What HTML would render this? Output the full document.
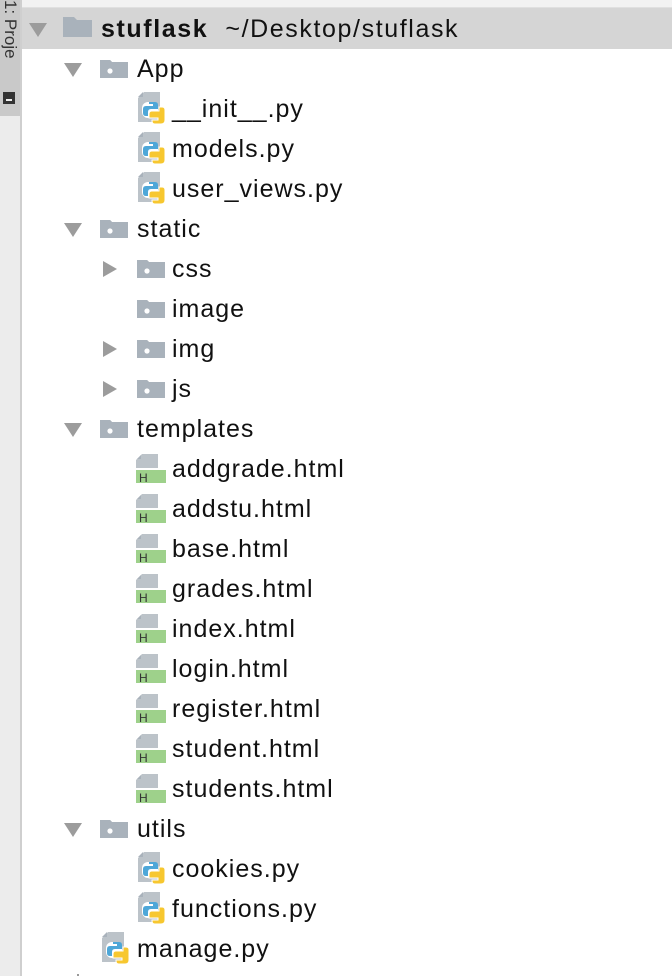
<!DOCTYPE html><html><head><style>
body{margin:0;width:672px;height:976px;background:#fff;position:relative;overflow:hidden;font-family:"Liberation Sans",Helvetica,Arial,sans-serif}
.ls{position:absolute;left:0;top:0;width:20px;height:976px;background:#ececec;border-right:2px solid #cfcfcf}
.lt{position:absolute;left:0;top:0;width:20px;height:116px;background:#c9c9c9}
.top{position:absolute;left:22px;top:0;right:0;height:7px;background:#f2f2f2;border-bottom:1px solid #e0e0e0}
.hdr{position:absolute;left:22px;top:8px;right:0;height:41px;background:#d5d5d5}
.r{position:absolute;height:40px;font-size:25px;letter-spacing:1px;line-height:40px;color:#111;white-space:nowrap}
.tri{position:absolute;width:0;height:0}
.down{border-left:9px solid transparent;border-right:9px solid transparent;border-top:14px solid #9c9c9c}
.right{border-top:8px solid transparent;border-bottom:8px solid transparent;border-left:14px solid #9c9c9c}
svg{position:absolute;overflow:visible}
</style></head><body>
<div class="ls"></div><div class="lt"></div>
<div style="position:absolute;left:0;top:0;width:20px;height:80px;font-size:17px;color:#333;writing-mode:vertical-rl;line-height:20px;">1: Proje</div>
<div style="position:absolute;left:3px;top:92px;width:12px;height:12px;background:#333"><div style="position:absolute;left:3px;top:7px;width:6px;height:2px;background:#eee"></div></div>
<div class="top"></div><div class="hdr"></div>
<svg width="0" height="0" style="position:absolute"><defs>
<g id="fold"><path d="M0 3 L0 20 L29 20 L29 3 L14 3 L11 0 L0 0 Z" fill="#a9b2bb"/></g>
<g id="fdot"><path d="M0 0 L0 18 L28 18 L28 2 L12 2 L10 0 Z" fill="#a9b2bb"/><path d="M0 0 L10 0 L12 2 L12 5 L0 5 Z" fill="#a9b2bb"/><circle cx="10" cy="11" r="2.6" fill="#fff"/></g>
<g id="py"><path d="M6 0 L22 0 L22 30 L0 30 L0 6 Z" fill="#bcc3c9"/><path d="M0 5 L5 5 L5 0 Z" fill="#a9b2bb"/>
<rect x="4" y="10" width="16" height="16" rx="6" fill="#fff"/>
<path d="M11 10 L17 10 Q20 10 20 13 L20 17 L13 17 Q10 17 10 20 L10 24 L8 24 Q5 24 5 21 L5 17 Q5 14 8 14 L15 14 L15 12 L11 12 Z" fill="#4ea7d8"/>
<path d="M11 26 L11 22 Q11 19 14 19 L21 19 L21 15 L24 15 Q27 15 27 18 L27 28 Q27 32 23 32 L17 32 Q14 32 14 29 L14 28 L20 28 L20 26 Z" fill="#f7c72f" stroke="#fff" stroke-width="1"/></g>
<g id="ht"><path d="M6 0 L22 0 L22 14 L0 14 L0 6 Z" fill="#bcc3c9"/><path d="M1 5 L5 5 L5 1 Z" fill="#a9b2bb"/><rect x="0" y="16" width="30" height="13" fill="#9ed18b"/><text x="3" y="28" font-size="12" fill="#333" font-family="Liberation Sans">H</text></g>
</defs></svg>

<div class="tri down" style="left:29px;top:23px"></div>
<svg style="left:63px;top:17px" width="30" height="20"><use href="#fold"/></svg>
<div class="r" style="left:101px;top:9px;letter-spacing:1.6px"><b>stuflask</b>&nbsp; ~/Desktop/stuflask</div>

<div class="tri down" style="left:64px;top:63px"></div>
<svg style="left:100px;top:60px" width="28" height="20"><use href="#fdot"/></svg>
<div class="r" style="left:137px;top:49px">App</div>

<svg style="left:138px;top:92px" width="30" height="34"><use href="#py"/></svg><div class="r" style="left:172px;top:89px">__init__.py</div>
<svg style="left:138px;top:132px" width="30" height="34"><use href="#py"/></svg><div class="r" style="left:172px;top:129px">models.py</div>
<svg style="left:138px;top:172px" width="30" height="34"><use href="#py"/></svg><div class="r" style="left:172px;top:169px">user_views.py</div>

<div class="tri down" style="left:64px;top:223px"></div>
<svg style="left:100px;top:220px" width="28" height="20"><use href="#fdot"/></svg>
<div class="r" style="left:137px;top:209px">static</div>

<div class="tri right" style="left:103px;top:261px"></div>
<svg style="left:137px;top:260px" width="28" height="20"><use href="#fdot"/></svg><div class="r" style="left:172px;top:249px">css</div>
<svg style="left:137px;top:300px" width="28" height="20"><use href="#fdot"/></svg><div class="r" style="left:172px;top:289px">image</div>
<div class="tri right" style="left:103px;top:341px"></div>
<svg style="left:137px;top:340px" width="28" height="20"><use href="#fdot"/></svg><div class="r" style="left:172px;top:329px">img</div>
<div class="tri right" style="left:103px;top:381px"></div>
<svg style="left:137px;top:380px" width="28" height="20"><use href="#fdot"/></svg><div class="r" style="left:172px;top:369px">js</div>

<div class="tri down" style="left:64px;top:423px"></div>
<svg style="left:100px;top:420px" width="28" height="20"><use href="#fdot"/></svg>
<div class="r" style="left:137px;top:409px">templates</div>

<svg style="left:136px;top:454px" width="32" height="30"><use href="#ht"/></svg><div class="r" style="left:172px;top:449px">addgrade.html</div>
<svg style="left:136px;top:494px" width="32" height="30"><use href="#ht"/></svg><div class="r" style="left:172px;top:489px">addstu.html</div>
<svg style="left:136px;top:534px" width="32" height="30"><use href="#ht"/></svg><div class="r" style="left:172px;top:529px">base.html</div>
<svg style="left:136px;top:574px" width="32" height="30"><use href="#ht"/></svg><div class="r" style="left:172px;top:569px">grades.html</div>
<svg style="left:136px;top:614px" width="32" height="30"><use href="#ht"/></svg><div class="r" style="left:172px;top:609px">index.html</div>
<svg style="left:136px;top:654px" width="32" height="30"><use href="#ht"/></svg><div class="r" style="left:172px;top:649px">login.html</div>
<svg style="left:136px;top:694px" width="32" height="30"><use href="#ht"/></svg><div class="r" style="left:172px;top:689px">register.html</div>
<svg style="left:136px;top:734px" width="32" height="30"><use href="#ht"/></svg><div class="r" style="left:172px;top:729px">student.html</div>
<svg style="left:136px;top:774px" width="32" height="30"><use href="#ht"/></svg><div class="r" style="left:172px;top:769px">students.html</div>

<div class="tri down" style="left:64px;top:823px"></div>
<svg style="left:100px;top:820px" width="28" height="20"><use href="#fdot"/></svg>
<div class="r" style="left:137px;top:809px">utils</div>
<svg style="left:138px;top:852px" width="30" height="34"><use href="#py"/></svg><div class="r" style="left:172px;top:849px">cookies.py</div>
<svg style="left:138px;top:892px" width="30" height="34"><use href="#py"/></svg><div class="r" style="left:172px;top:889px">functions.py</div>
<svg style="left:102px;top:932px" width="30" height="34"><use href="#py"/></svg><div class="r" style="left:137px;top:929px">manage.py</div>
<div style="position:absolute;left:77px;top:974px;width:2px;height:2px;background:#999"></div>
</body></html>
